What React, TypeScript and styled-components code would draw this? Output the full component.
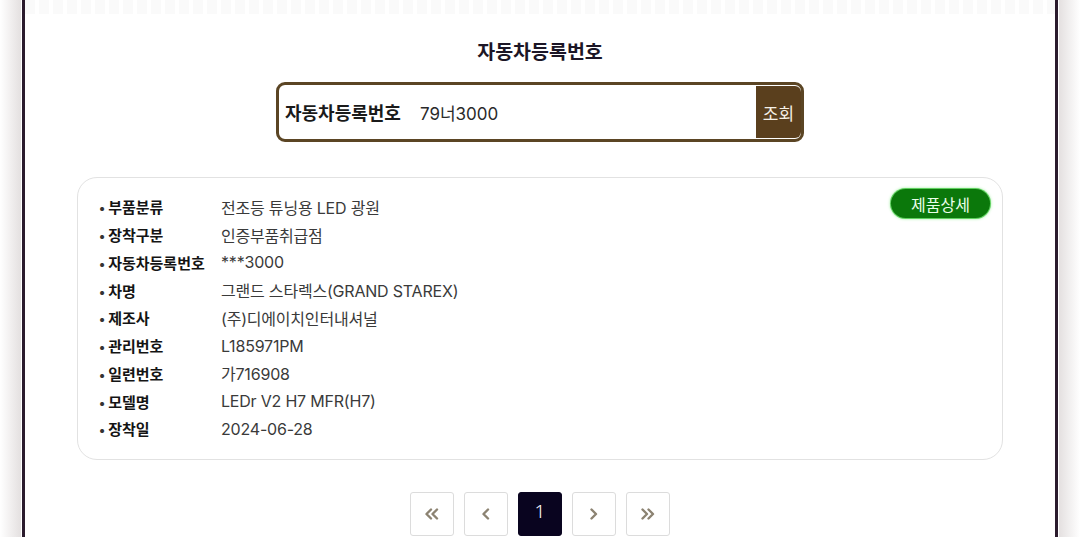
import styled, { createGlobalStyle } from "styled-components";

const GlobalStyle = createGlobalStyle`
  html, body {
    margin: 0;
    padding: 0;
    background: #ffffff;
    font-family: Inter, "Noto Sans CJK KR", sans-serif;
  }
`;

const Page = styled.div`
  display: flex;
  height: 537px;
  overflow: hidden;
  background: linear-gradient(to right, #ffffff 0px, #e4e0e0 21px, #ffffff 21px, #ffffff 1059px, #e4e0e0 1059px, #ffffff 1080px);
`;

const Frame = styled.div`
  flex: 1;
  margin: 0 22px;
  border-left: 3px solid #2b1b2d;
  border-right: 3px solid #2b1b2d;
  background: #ffffff;
  display: flex;
  flex-direction: column;
  align-items: center;
`;

const TopStrip = styled.div`
  align-self: stretch;
  height: 14px;
  margin-bottom: 24px;
  background: repeating-linear-gradient(to right, #fafafa 0px, #fafafa 10px, #ffffff 10px, #ffffff 14px);
`;

const Title = styled.h2`
  margin: 0;
  font-size: 19.5px;
  line-height: 28px;
  font-weight: 700;
  color: #1c1626;
`;

const SearchBox = styled.div`
  margin-top: 16px;
  width: 528px;
  height: 60px;
  box-sizing: border-box;
  border: 3px solid #5b4524;
  border-radius: 9px;
  display: flex;
  align-items: center;
  padding: 1px 0 1px 6px;
`;

const SearchLabel = styled.span`
  font-size: 18px;
  font-weight: 700;
  color: #1a1a1a;
`;

const SearchValue = styled.span`
  flex: 1;
  margin-left: 19px;
  font-size: 17px;
  color: #2a2a2a;
`;

const SearchButton = styled.button`
  align-self: stretch;
  width: 45px;
  border: none;
  border-radius: 0 6px 6px 0;
  background: #5a3f1d;
  color: #f4efe6;
  font-family: inherit;
  font-size: 17px;
  padding: 0;
`;

const Card = styled.div`
  margin-top: 35px;
  width: 926px;
  height: 283px;
  box-sizing: border-box;
  border: 1px solid #e2e2e2;
  border-radius: 20px;
  padding: 15px 20px 0 21px;
  display: flex;
  justify-content: space-between;
  align-items: flex-start;
`;

const InfoList = styled.ul`
  list-style: none;
  margin: 0;
  padding: 0;
`;

const InfoRow = styled.li`
  display: grid;
  grid-template-columns: 122px 1fr;
  height: 27.75px;
  align-items: center;
`;

const InfoLabel = styled.span`
  font-size: 15px;
  font-weight: 700;
  color: #141414;
  &::before {
    content: "•";
    margin-right: 3px;
    font-size: 13px;
    color: #333;
  }
`;

const InfoValue = styled.span`
  font-size: 16px;
  color: #3a3a3a;
  letter-spacing: -0.2px;
`;

const DetailButton = styled.button`
  margin-top: -4px;
  margin-right: -8px;
  width: 99px;
  height: 29px;
  border: none;
  border-radius: 15px;
  background: #0b780b;
  box-shadow: 0 0 0 1px #5fd05f, 0 0 3px 1px #a6eea6;
  color: #eaffea;
  font-family: inherit;
  font-size: 16px;
  padding: 0;
`;

const Pager = styled.div`
  margin-top: 32px;
  display: flex;
  gap: 10px;
`;

const PageButton = styled.button<{ $active?: boolean }>`
  width: 44px;
  height: 44px;
  box-sizing: border-box;
  display: flex;
  align-items: center;
  justify-content: center;
  border: 1px solid ${p => (p.$active ? "#0a0520" : "#dcdcdc")};
  border-radius: 3px;
  background: ${p => (p.$active ? "#09041f" : "#ffffff")};
  color: ${p => (p.$active ? "#ffffff" : "#8c8372")};
  font-family: "Noto Sans", sans-serif;
  font-size: 19px;
  font-weight: 300;
  line-height: 1;
  padding: ${p => (p.$active ? "0 0 6px" : "0")};
`;

const Chevron = ({ dir, double }: { dir: "left" | "right"; double?: boolean }) => {
  const one = dir === "left" ? "M6 1 L1.5 5.5 L6 10" : "M1.5 1 L6 5.5 L1.5 10";
  return (
    <svg width={double ? 14 : 8} height="12" viewBox={double ? "0 0 14 12" : "0 0 8 12"}>
      <g fill="none" stroke="#8c8372" strokeWidth="2.4" strokeLinecap="round" strokeLinejoin="round" transform="translate(0 0.5)">
        <path d={one} />
        {double && <path d={one} transform="translate(6 0)" />}
      </g>
    </svg>
  );
};

const rows: [string, string][] = [
  ["부품분류", "전조등 튜닝용 LED 광원"],
  ["장착구분", "인증부품취급점"],
  ["자동차등록번호", "***3000"],
  ["차명", "그랜드 스타렉스(GRAND STAREX)"],
  ["제조사", "(주)디에이치인터내셔널"],
  ["관리번호", "L185971PM"],
  ["일련번호", "가716908"],
  ["모델명", "LEDr V2 H7 MFR(H7)"],
  ["장착일", "2024-06-28"],
];

export default function App() {
  return (
    <>
      <GlobalStyle />
      <Page>
        <Frame>
          <TopStrip />
          <Title>자동차등록번호</Title>
          <SearchBox>
            <SearchLabel>자동차등록번호</SearchLabel>
            <SearchValue>79너3000</SearchValue>
            <SearchButton>조회</SearchButton>
          </SearchBox>
          <Card>
            <InfoList>
              {rows.map(([label, value]) => (
                <InfoRow key={label}>
                  <InfoLabel>{label}</InfoLabel>
                  <InfoValue>{value}</InfoValue>
                </InfoRow>
              ))}
            </InfoList>
            <DetailButton>제품상세</DetailButton>
          </Card>
          <Pager>
            <PageButton><Chevron dir="left" double /></PageButton>
            <PageButton><Chevron dir="left" /></PageButton>
            <PageButton $active>1</PageButton>
            <PageButton><Chevron dir="right" /></PageButton>
            <PageButton><Chevron dir="right" double /></PageButton>
          </Pager>
        </Frame>
      </Page>
    </>
  );
}
